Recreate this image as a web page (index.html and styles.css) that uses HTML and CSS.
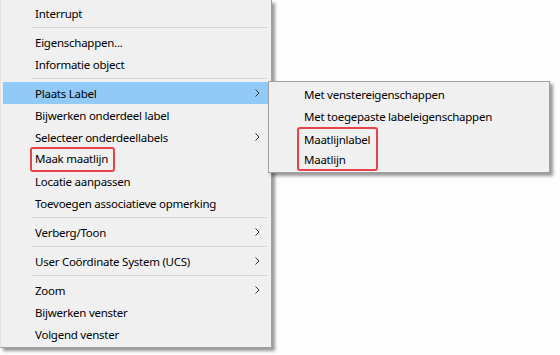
FILE: index.html
```html
<!DOCTYPE html>
<html lang="en">
<head>
  <meta charset="UTF-8" />
  <title>Contextmenu</title>
  <link rel="stylesheet" href="styles.css">
</head>
<body>
  <div class="stage">

    <ul class="menu main-menu">
      <li class="item">Interrupt</li>
      <li class="sep"></li>
      <li class="item">Eigenschappen...</li>
      <li class="item">Informatie object</li>
      <li class="sep"></li>
      <li class="item active has-sub">Plaats Label
        <svg class="chev" width="5" height="8" viewBox="0 0 5 8"><polyline points="0.5,0.5 4,4 0.5,7.5" /></svg>
      </li>
      <li class="item">Bijwerken onderdeel label</li>
      <li class="item has-sub">Selecteer onderdeellabels
        <svg class="chev" width="5" height="8" viewBox="0 0 5 8"><polyline points="0.5,0.5 4,4 0.5,7.5" /></svg>
      </li>
      <li class="item"><span class="mark">Maak maatlijn</span></li>
      <li class="item">Locatie aanpassen</li>
      <li class="item">Toevoegen associatieve opmerking</li>
      <li class="sep"></li>
      <li class="item has-sub">Verberg/Toon
        <svg class="chev" width="5" height="8" viewBox="0 0 5 8"><polyline points="0.5,0.5 4,4 0.5,7.5" /></svg>
      </li>
      <li class="sep"></li>
      <li class="item has-sub">User Coördinate System (UCS)
        <svg class="chev" width="5" height="8" viewBox="0 0 5 8"><polyline points="0.5,0.5 4,4 0.5,7.5" /></svg>
      </li>
      <li class="sep"></li>
      <li class="item has-sub">Zoom
        <svg class="chev" width="5" height="8" viewBox="0 0 5 8"><polyline points="0.5,0.5 4,4 0.5,7.5" /></svg>
      </li>
      <li class="item">Bijwerken venster</li>
      <li class="item">Volgend venster</li>
    </ul>

    <ul class="menu sub-menu">
      <li class="item">Met venstereigenschappen</li>
      <li class="item">Met toegepaste labeleigenschappen</li>
      <li class="mark-group">
        <div class="item">Maatlijnlabel</div>
        <div class="item">Maatlijn</div>
      </li>
    </ul>

  </div>
</body>
</html>
```

FILE: styles.css
```css
body {
  margin: 0;
  padding: 0;
  background-color: #fdfdfd;
  font-family: 'Noto Sans', 'Segoe UI', sans-serif;
  font-size: 11.5px;
  letter-spacing: -0.25px;
  color: #000;
}

.stage {
  position: relative;
  width: 560px;
  height: 355px;
}

.menu {
  list-style: none;
  margin: 0;
  background-color: #f0f0f0;
  border: 1px solid #a0a0a0;
  box-shadow: 3px 3px 3px rgba(0, 0, 0, 0.4);
}

.main-menu {
  width: 266px;
  padding: 2px 2px 2px 2px;
  border-top: none;
  border-left-color: #e4e4e4;
}

.item {
  display: flex;
  align-items: center;
  height: 22px;
  padding-left: 32px;
  white-space: nowrap;
}

.item.active {
  background-color: #91c9f7;
}

.has-sub .chev {
  margin-left: auto;
  margin-right: 9px;
}

.chev polyline {
  fill: none;
  stroke: #333;
  stroke-width: 1;
}

.sep {
  height: 1px;
  margin: 3px 2px 3px 28px;
  background-color: #d7d7d7;
}

.mark {
  display: inline-block;
  margin: 0 -5px;
  padding: 1px 5px 2px 3px;
  border: 2px solid #e8424a;
  border-radius: 3px;
  line-height: 18px;
}

/* submenu opens over the main menu, next to the active row */
.sub-menu {
  position: absolute;
  left: 268px;
  top: 81px;
  width: 276px;
  padding: 1px 2px 1px 2px;
}

.sub-menu .item {
  padding-left: 33px;
}

.mark-group {
  width: 77px;
  margin-left: 26px;
  border: 2px solid #e8424a;
  border-radius: 3px;
}

.mark-group .item {
  height: 20px;
  padding-left: 5px;
}
```
